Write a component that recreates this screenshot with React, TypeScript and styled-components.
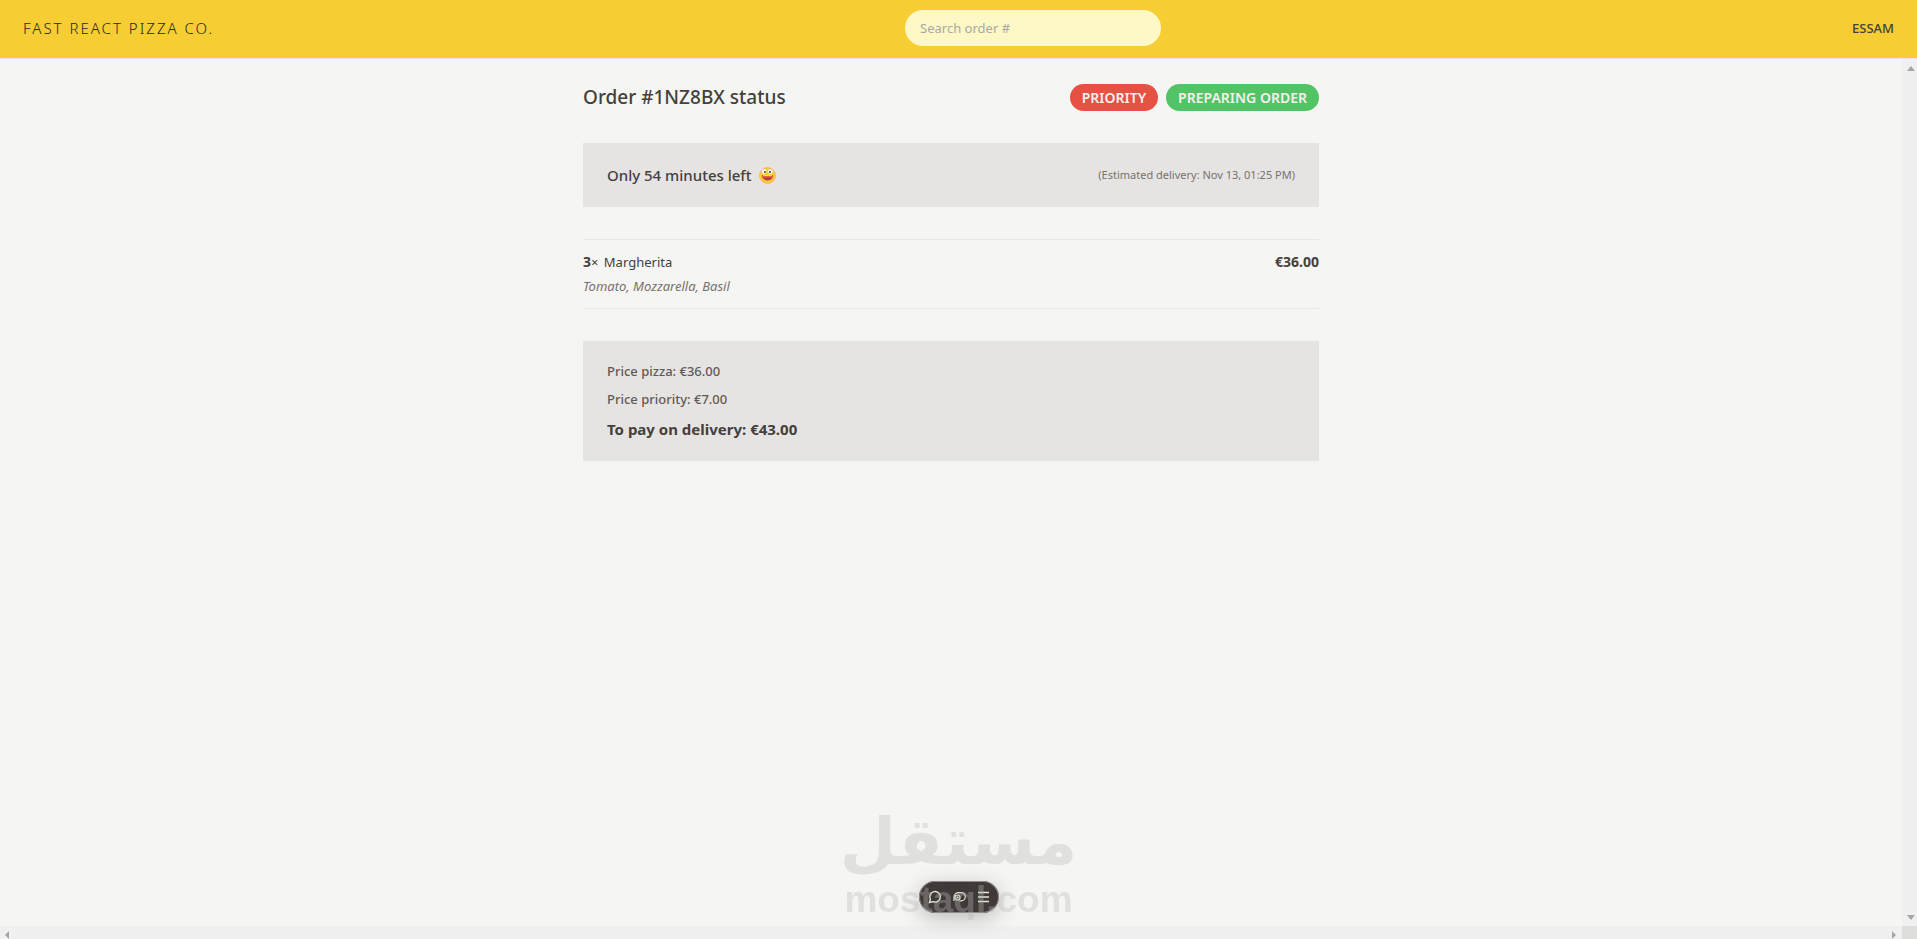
import React from "react";
import styled, { createGlobalStyle } from "styled-components";

const GlobalStyle = createGlobalStyle`
  * { box-sizing: border-box; margin: 0; padding: 0; }
  body {
    background: #f5f5f3;
    color: #44403c;
    font-family: "Noto Sans", "Open Sans", sans-serif;
    font-size: 13px;
    line-height: 20px;
  }
`;

const Page = styled.div`
  display: grid;
  grid-template-rows: auto 1fr;
  height: 100vh;
`;

const Header = styled.header`
  display: flex;
  align-items: center;
  justify-content: space-between;
  padding: 10px 23px 12px;
  background: #f7cd34;
  border-bottom: 1px solid #e7e5e0;
`;

const Brand = styled.a`
  color: #292524;
  font-size: 15px;
  line-height: 24px;
  font-weight: 300;
  letter-spacing: 2px;
  text-decoration: none;
  text-transform: uppercase;
`;

const Search = styled.input`
  width: 256px;
  height: 36px;
  padding: 0 15px;
  border: 0;
  border-radius: 18px;
  background: #fef7c6;
  color: #44403c;
  font: inherit;
  &::placeholder { color: #a8a9a3; opacity: 1; }
`;

const UserName = styled.p`
  font-weight: 500;
  text-transform: uppercase;
`;

const Viewport = styled.div`
  display: grid;
  grid-template-columns: 1fr 15px;
  grid-template-rows: 1fr 13px;
  min-height: 0;
`;

const Content = styled.div`
  overflow: hidden;
`;

const Main = styled.main`
  display: flex;
  flex-direction: column;
  gap: 32px;
  max-width: 768px;
  margin: 0 auto;
  padding: 24px 16px;
`;

const TitleRow = styled.div`
  display: flex;
  align-items: flex-end;
  justify-content: space-between;
`;

const Title = styled.h1`
  font-size: 19px;
  line-height: 28px;
  font-weight: 500;
`;

const Badges = styled.div`
  display: flex;
  gap: 8px;
`;

const Badge = styled.span<{ $color: string }>`
  padding: 4px 12px 3px;
  border-radius: 14px;
  background: ${(p) => p.$color};
  color: #f5f0ee;
  font-size: 14px;
  font-weight: 600;
  text-transform: uppercase;
`;

const Panel = styled.section`
  padding: 20px 24px;
  background: #e6e4e2;
`;

const StatusPanel = styled(Panel)`
  display: flex;
  align-items: center;
  justify-content: space-between;
`;

const TimeLeft = styled.p`
  display: flex;
  align-items: center;
  gap: 8px;
  font-size: 15px;
  line-height: 24px;
  font-weight: 500;
`;

const Estimate = styled.p`
  color: #78716c;
  font-size: 11px;
  line-height: 16px;
`;

const Items = styled.ul`
  list-style: none;
  border-top: 1px solid #e6e6e8;
  border-bottom: 1px solid #e6e6e8;
`;

const Item = styled.li`
  display: flex;
  flex-direction: column;
  gap: 4px;
  padding: 12px 0;
`;

const ItemLine = styled.div`
  display: flex;
  justify-content: space-between;
`;

const Strong = styled.span`
  font-size: 14px;
  font-weight: 700;
`;

const Quantity = styled.span`
  margin-right: 2px;
`;

const Ingredients = styled.p`
  color: #78716c;
  font-style: italic;
`;

const Summary = styled(Panel)`
  display: flex;
  flex-direction: column;
  gap: 8px;
`;

const Price = styled.p`
  color: #5f5a55;
  font-weight: 500;
`;

const Total = styled.p`
  font-size: 15px;
  line-height: 24px;
  font-weight: 700;
`;

const VerticalBar = styled.div`
  display: flex;
  flex-direction: column;
  align-items: center;
  justify-content: space-between;
  padding: 7px 0 6px 2px;
  background: #f0f0f0;
`;

const HorizontalBar = styled.div`
  display: flex;
  align-items: center;
  justify-content: space-between;
  padding: 4px 6px 0 5px;
  background: #f0f0f0;
`;

const Corner = styled.div`
  background: #dededc;
`;

const Arrow = styled.svg`
  display: block;
  fill: #a5a6a1;
`;

const Toolbar = styled.div`
  position: fixed;
  bottom: 26px;
  left: 50%;
  transform: translateX(-50%);
  display: flex;
  align-items: center;
  justify-content: center;
  gap: 8px;
  width: 80px;
  height: 32px;
  border-radius: 16px;
  background: #3f3a37;
  box-shadow: 0 0 0 1px #8d8a87 inset, 0 5px 20px rgba(60, 60, 60, 0.3);
`;

const ToolButton = styled.button`
  display: flex;
  width: 16px;
  height: 16px;
  border: 0;
  background: none;
  color: #e4e5df;
`;

const Watermark = styled.div`
  position: fixed;
  bottom: 19px;
  left: 50%;
  transform: translateX(-50%);
  display: flex;
  flex-direction: column;
  align-items: center;
  color: #b9b9b7;
  opacity: 0.35;
  pointer-events: none;
`;

const WatermarkArabic = styled.span`
  font-family: "DejaVu Sans", sans-serif;
  font-size: 65px;
  line-height: 76px;
  font-weight: 700;
`;

const WatermarkLatin = styled.span`
  font-family: "Liberation Sans", sans-serif;
  font-size: 37px;
  line-height: 40px;
  font-weight: 700;
`;

const Grin = () => (
  <svg width="17" height="17" viewBox="0 0 17 17" role="img" aria-label="grinning face">
    <circle cx="8.5" cy="8.5" r="8" fill="#f8ca35" stroke="#f0a878" strokeWidth="0.7" />
    <circle cx="5.2" cy="4.6" r="2.3" fill="#fff" />
    <circle cx="11.4" cy="4.6" r="2.3" fill="#fff" />
    <circle cx="5.9" cy="5" r="0.9" fill="#222" />
    <circle cx="11" cy="5" r="0.9" fill="#222" />
    <path d="M3 8h11c0.3 3.5-2.2 5.5-5.5 5.5S2.7 11.5 3 8z" fill="#d2452f" />
    <path d="M4 8h9v1.3H4z" fill="#fbc9bb" />
    <path d="M5.5 12c1.500-1.200 4.500-1.200 6 0-1.500 1.600-4.500 1.600-6 0z" fill="#a8423c" />
  </svg>
);

export default function App() {
  return (
    <>
      <GlobalStyle />
      <Page>
        <Header>
          <Brand href="#">Fast React Pizza Co.</Brand>
          <Search type="text" placeholder="Search order #" aria-label="Search order" />
          <UserName>Essam</UserName>
        </Header>
        <Viewport>
          <Content>
            <Main>
              <TitleRow>
                <Title>Order #1NZ8BX status</Title>
                <Badges>
                  <Badge $color="#e55244">Priority</Badge>
                  <Badge $color="#53c466">Preparing order</Badge>
                </Badges>
              </TitleRow>
              <StatusPanel>
                <TimeLeft>
                  Only 54 minutes left <Grin />
                </TimeLeft>
                <Estimate>(Estimated delivery: Nov 13, 01:25 PM)</Estimate>
              </StatusPanel>
              <Items>
                <Item>
                  <ItemLine>
                    <p>
                      <Quantity><Strong>3</Strong>×</Quantity> Margherita
                    </p>
                    <Strong>€36.00</Strong>
                  </ItemLine>
                  <Ingredients>Tomato, Mozzarella, Basil</Ingredients>
                </Item>
              </Items>
              <Summary>
                <Price>Price pizza: €36.00</Price>
                <Price>Price priority: €7.00</Price>
                <Total>To pay on delivery: €43.00</Total>
              </Summary>
            </Main>
          </Content>
          <VerticalBar>
            <Arrow width="8" height="5" viewBox="0 0 8 5"><path d="M4 0l4 5H0z" /></Arrow>
            <Arrow width="8" height="5" viewBox="0 0 8 5"><path d="M0 0h8L4 5z" /></Arrow>
          </VerticalBar>
          <HorizontalBar>
            <Arrow width="4" height="8" viewBox="0 0 4 8"><path d="M4 0v8L0 4z" /></Arrow>
            <Arrow width="4" height="8" viewBox="0 0 4 8"><path d="M0 0l4 4-4 4z" /></Arrow>
          </HorizontalBar>
          <Corner />
        </Viewport>
      </Page>
      <Toolbar>
        <ToolButton aria-label="Comments">
          <svg width="16" height="16" viewBox="0 0 16 16" fill="none" stroke="currentColor" strokeWidth="1.3">
            <path d="M2.500 13.500l.9-3.200A5.300 5.300 0 1 1 6 12.700z" />
          </svg>
        </ToolButton>
        <ToolButton aria-label="Flags">
          <svg width="16" height="16" viewBox="0 0 16 16" fill="none" stroke="currentColor" strokeWidth="1.2">
            <path d="M3 12V8a4.500 4.500 0 0 1 4.500-4.400h2.700a4 4 0 0 1 0 8.200H8.500" />
            <circle cx="6.5" cy="8.5" r="2.5" />
            <circle cx="6.5" cy="8.5" r="0.5" />
          </svg>
        </ToolButton>
        <ToolButton aria-label="Menu">
          <svg width="16" height="16" viewBox="0 0 16 16" fill="none" stroke="currentColor" strokeWidth="1.3">
            <path d="M3 3.500h11M3 8h11M3 12.500h11" />
          </svg>
        </ToolButton>
      </Toolbar>
      <Watermark aria-hidden="true">
        <WatermarkArabic lang="ar" dir="rtl">مستقل</WatermarkArabic>
        <WatermarkLatin>mostaql.com</WatermarkLatin>
      </Watermark>
    </>
  );
}
